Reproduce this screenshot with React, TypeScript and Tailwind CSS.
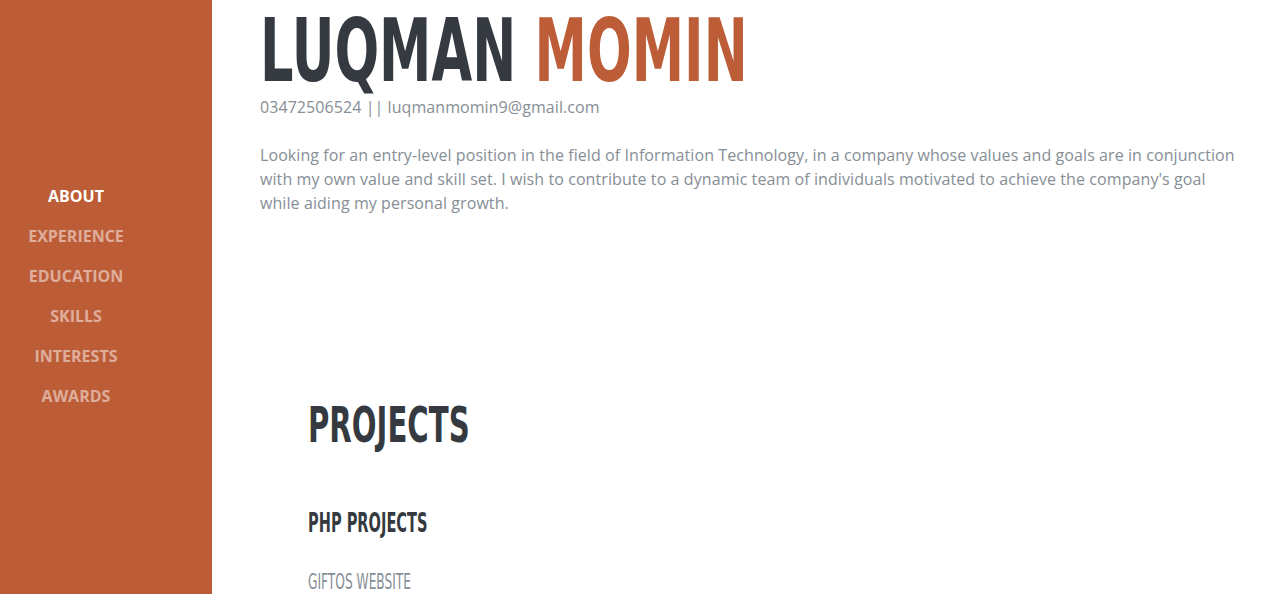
const heading = { fontFamily: '"DejaVu Sans", sans-serif' };
const body = { fontFamily: '"Open Sans", "Liberation Sans", sans-serif' };

const navItems = ['About', 'Experience', 'Education', 'Skills', 'Interests', 'Awards'];

function Sidebar() {
  return (
    <aside className="w-[212px] shrink-0 h-screen sticky top-0 bg-[#bd5d38] flex items-center" style={body}>
      <nav className="w-[152px] flex flex-col -mt-0.5">
        {navItems.map((item, i) => (
          <a
            key={item}
            href="#"
            className={
              'block text-center uppercase font-bold text-base leading-6 py-2 ' +
              (i === 0 ? 'text-white' : 'text-white/50')
            }
          >
            {item}
          </a>
        ))}
      </nav>
    </aside>
  );
}

export default function App() {
  return (
    <div className="flex min-h-screen bg-white overflow-hidden">
      <Sidebar />
      <main className="flex-1 pl-12 pr-5 pt-[6px]">
        <section>
          <h1
            className="origin-left scale-x-[0.598] font-bold uppercase text-[88px] leading-[89px] text-[#343a40] whitespace-nowrap"
            style={heading}
          >
            Luqman <span className="text-[#bd5d38]">Momin</span>
          </h1>
          <div className="text-base leading-6 tracking-[0.07px] text-[#868e96] mb-6" style={body}>
            03472506524 || luqmanmomin9@gmail.com
          </div>
          <p className="text-base leading-6 tracking-[0.08px] text-[#868e96]" style={body}>
            Looking for an entry-level position in the field of Information Technology, in a company whose values
            and goals are in conjunction with my own value and skill set. I wish to contribute to a dynamic team of
            individuals motivated to achieve the company's goal while aiding my personal growth.
          </p>
        </section>
        <section className="pl-12 pt-[181px]">
          <h2
            className="origin-left scale-x-[0.595] font-bold uppercase text-[49px] leading-[60px] text-[#343a40] whitespace-nowrap"
            style={heading}
          >
            Projects
          </h2>
          <h3
            className="mt-[51px] origin-left scale-x-[0.54] font-bold uppercase text-[27px] leading-8 text-[#343a40] whitespace-nowrap"
            style={heading}
          >
            PHP Projects
          </h3>
          <h4
            className="mt-[29px] origin-left scale-x-[0.555] font-medium uppercase text-[22px] leading-7 text-[#868e96] whitespace-nowrap"
            style={heading}
          >
            Giftos Website
          </h4>
        </section>
      </main>
    </div>
  );
}
